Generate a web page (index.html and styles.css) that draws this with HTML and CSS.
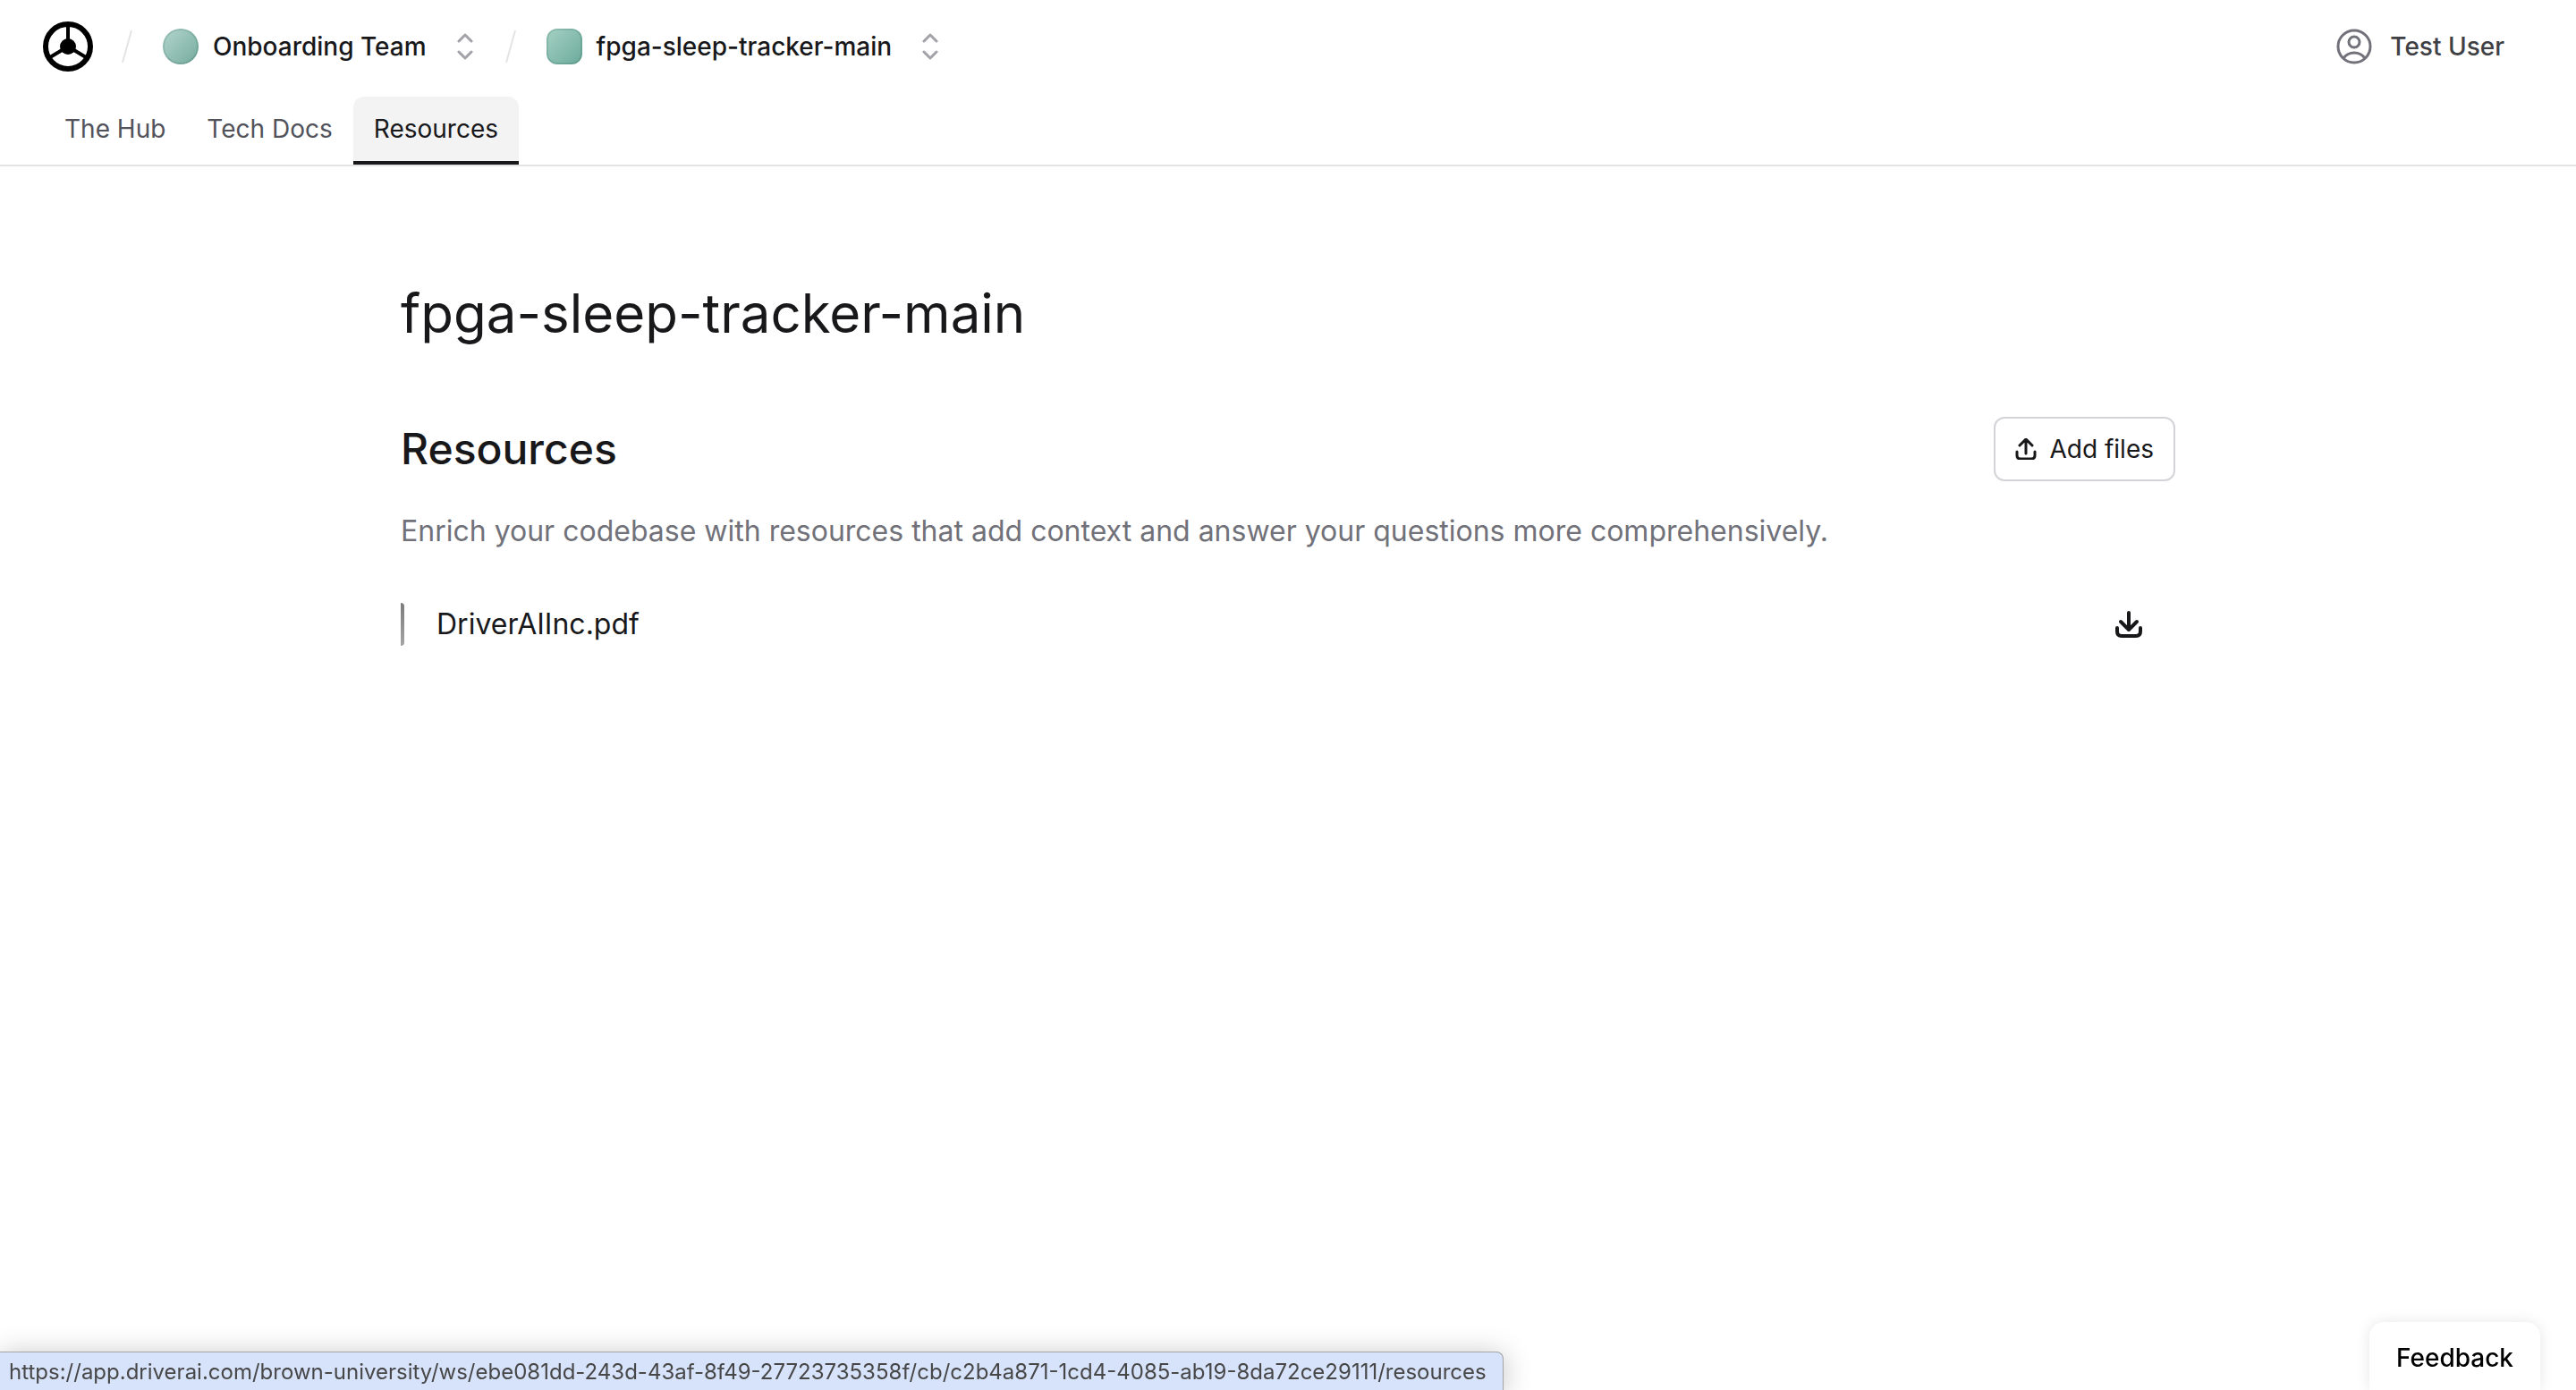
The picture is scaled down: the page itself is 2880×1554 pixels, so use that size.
FILE: index.html
```html
<!DOCTYPE html>
<html lang="en">
<head>
<meta charset="utf-8">
<meta name="viewport" content="width=device-width, initial-scale=1">
<title>fpga-sleep-tracker-main</title>
<link rel="stylesheet" href="styles.css">
</head>
<body>
<header class="header">
  <div class="topbar">
    <a class="logo" href="#" aria-label="Home">
      <svg width="56" height="56" viewBox="0 0 56 56" fill="none" stroke="#000">
        <circle cx="28" cy="28" r="25" stroke-width="6"/>
        <circle cx="28" cy="28" r="9" fill="#000" stroke="none"/>
        <path d="M28 28V4M28 28L8 40M28 28L48 40" stroke-width="4"/>
      </svg>
    </a>
    <svg class="slash" width="12" height="36" viewBox="0 0 12 36" fill="none" stroke="#e4e4e7" stroke-width="2"><path d="M11 0L1 36"/></svg>
    <button class="switcher" type="button">
      <span class="avatar avatar-team"></span>
      <span>Onboarding Team</span>
      <svg class="chevrons" width="18" height="30" viewBox="0 0 18 30" fill="none" stroke="#a1a1aa" stroke-width="3" stroke-linecap="round" stroke-linejoin="round"><path d="M2 9l7-7 7 7M2 21l7 7 7-7"/></svg>
    </button>
    <svg class="slash" width="12" height="36" viewBox="0 0 12 36" fill="none" stroke="#e4e4e7" stroke-width="2"><path d="M11 0L1 36"/></svg>
    <button class="switcher" type="button">
      <span class="avatar avatar-codebase"></span>
      <span>fpga-sleep-tracker-main</span>
      <svg class="chevrons" width="18" height="30" viewBox="0 0 18 30" fill="none" stroke="#a1a1aa" stroke-width="3" stroke-linecap="round" stroke-linejoin="round"><path d="M2 9l7-7 7 7M2 21l7 7 7-7"/></svg>
    </button>
    <button class="user" type="button">
      <svg width="40" height="40" viewBox="0 0 40 40" fill="none" stroke="#71717a" stroke-width="3">
        <circle cx="20" cy="20" r="18"/>
        <circle cx="20" cy="15" r="6"/>
        <path d="M8 33C11 29 15 27 20 27s9 2 12 6"/>
      </svg>
      <span>Test User</span>
    </button>
  </div>
  <nav class="tabs">
    <a class="tab" href="#">The Hub</a>
    <a class="tab" href="#">Tech Docs</a>
    <a class="tab tab-active" href="#" aria-current="page">Resources</a>
  </nav>
</header>
<main class="main">
  <h1 class="title">fpga-sleep-tracker-main</h1>
  <section>
    <div class="section-head">
      <h2 class="section-title">Resources</h2>
      <button class="add" type="button">
        <svg width="24" height="24" viewBox="0 0 24 24" fill="none" stroke="#18181b" stroke-width="3" stroke-linecap="round" stroke-linejoin="round"><path d="M12 17V2M5 8l7-7 7 7M2 15v4q0 4 4 4h12q4 0 4-4v-4"/></svg>
        <span>Add files</span>
      </button>
    </div>
    <p class="lead">Enrich your codebase with resources that add context and answer your questions more comprehensively.</p>
    <ul class="files">
      <li class="file">
        <span class="file-name">DriverAIInc.pdf</span>
        <button class="download" type="button" aria-label="Download DriverAIInc.pdf">
          <svg width="30" height="30" viewBox="0 0 30 30" fill="none" stroke="#18181b" stroke-width="4" stroke-linecap="round" stroke-linejoin="round"><path d="M15 2v19M6 12l9 9 9-9M2 19v4q0 5 5 5h16q5 0 5-5v-4"/></svg>
        </button>
      </li>
    </ul>
  </section>
</main>
<button class="feedback" type="button">Feedback</button>
<div class="status">https://app.driverai.com/brown-university/ws/ebe081dd-243d-43af-8f49-27723735358f/cb/c2b4a871-1cd4-4085-ab19-8da72ce29111/resources</div>
</body>
</html>
```
FILE: styles.css
```css
* {
  box-sizing: border-box;
}

body {
  margin: 0;
  background: #fff;
  color: #18181b;
  font-family: Inter, "Liberation Sans", sans-serif;
  font-size: 28px;
  line-height: 40px;
}

button {
  margin: 0;
  padding: 0;
  border: 0;
  background: none;
  color: inherit;
  font: inherit;
  cursor: pointer;
}

svg {
  display: block;
  flex: none;
}

.header {
  border-bottom: 2px solid #e4e4e4;
}

.topbar {
  display: flex;
  align-items: center;
  height: 104px;
  padding: 0 80px 0 48px;
}

.slash {
  margin: 0 34px 0 32px;
}

.switcher {
  display: flex;
  align-items: center;
  gap: 16px;
  font-weight: 500;
}

.avatar {
  width: 40px;
  height: 40px;
  border: 2px solid rgba(0, 60, 50, 0.12);
  background: linear-gradient(135deg, #b4d6cc, #74aa9d) border-box;
}

.avatar-team {
  border-radius: 50%;
}

.avatar-codebase {
  border-radius: 12px;
  background: linear-gradient(135deg, #a6d2c4, #6aaa9b) border-box;
}

.chevrons {
  margin-left: 18px;
  margin-right: 4px;
}

.user {
  display: flex;
  align-items: center;
  gap: 20px;
  margin-left: auto;
  color: #3f3f46;
  font-weight: 500;
}

.tabs {
  display: flex;
  padding: 4px 49px 0;
}

.tab {
  padding: 16px 23px;
  border-bottom: 4px solid transparent;
  color: #52525b;
  text-decoration: none;
}

.tab-active {
  border-color: #18181b;
  border-radius: 12px 12px 0 0;
  background: linear-gradient(#f3f3f3, #f3f3f3);
  color: #18181b;
}

.main {
  max-width: 1984px;
  margin: 0 auto;
  padding: 128px 0;
}

.title {
  margin: 0 0 80px;
  font-size: 60px;
  font-weight: 400;
  line-height: 72px;
}

.section-head {
  display: flex;
  align-items: center;
  justify-content: space-between;
}

.section-title {
  margin: 0;
  font-size: 48px;
  font-weight: 500;
  line-height: 72px;
}

.add {
  display: flex;
  align-items: center;
  gap: 14px;
  padding: 14px 22px;
  border: 2px solid #d4d4d8;
  border-radius: 12px;
}

.lead {
  margin: 32px 0 56px;
  color: #71717a;
  font-size: 32px;
  line-height: 48px;
}

.files {
  margin: 0;
  padding: 0;
  list-style: none;
}

.file {
  display: flex;
  align-items: center;
  justify-content: space-between;
  padding-right: 37px;
  font-size: 32px;
  line-height: 48px;
}

.file::before {
  content: "";
  width: 4px;
  height: 48px;
  margin-right: 36px;
  border-radius: 0 4px 4px 0;
  background: linear-gradient(#7c7c7c, #a4a4a4);
}

.file-name {
  flex: 1;
}

.feedback {
  position: fixed;
  right: 40px;
  bottom: 0;
  padding: 20px 30px 16px;
  border-radius: 16px 16px 0 0;
  background: #fff;
  box-shadow: 0 0 16px rgba(0, 0, 0, 0.1);
  color: #000;
  font-weight: 500;
}

.status {
  position: fixed;
  left: 0;
  bottom: 0;
  padding: 2px 18px 0 10px;
  border: 1px solid #a3a5a8;
  border-width: 1px 1px 0 0;
  border-radius: 0 8px 0 0;
  background: #d7e2fb;
  box-shadow: 0 4px 32px rgba(0, 0, 0, 0.25);
  color: #474747;
  font-size: 24px;
  line-height: 40px;
}
```
